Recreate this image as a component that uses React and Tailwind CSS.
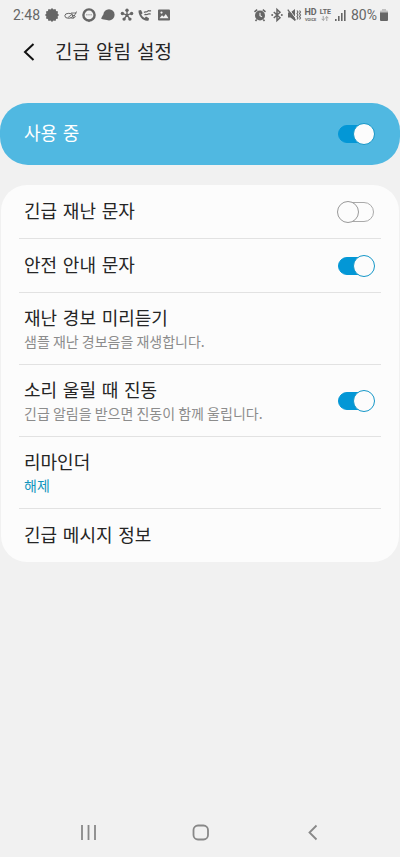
// App.jsx
import React, { useState } from 'react';

const burst = Array.from({ length: 24 }, (_, i) => {
  const r = i % 2 ? 5.8 : 7;
  const a = (i * Math.PI) / 12;
  return `${(7 + r * Math.sin(a)).toFixed(2)},${(7 - r * Math.cos(a)).toFixed(2)}`;
}).join(' ');

function StatusIcon({ children }) {
  return (
    <svg className="size-3.5 shrink-0 overflow-visible" viewBox="0 0 14 14" fill="none" stroke="currentColor" aria-hidden="true">
      {children}
    </svg>
  );
}

function StatusBar() {
  return (
    <div className="flex h-[30px] items-center pl-[13px] pr-3 text-sm text-[#666666] font-[Roboto,sans-serif]">
      <span className="w-8">2:48</span>

      {/* Notifications */}
      <div className="flex w-[126px] items-center justify-between">
        <StatusIcon>
          <polygon points={burst} fill="currentColor" stroke="none" />
        </StatusIcon>
        <StatusIcon>
          <ellipse cx="4.8" cy="7.8" rx="4" ry="2.5" />
          <path d="M4 9.5 8.5 6M7 5h5.5M12.5 3.5 9 10.5M6.5 9.5c2 1.2 4 .8 5.2-1.2M8 7.5h3" strokeWidth="0.9" />
        </StatusIcon>
        <StatusIcon>
          <circle cx="7" cy="7" r="5.6" strokeWidth="2.4" />
          <path d="M5 11.5 7 14.200l2-2.700z" fill="currentColor" stroke="none" />
          <path d="M4.4 6.8h1M6.500 6.800h1M8.600 6.800h1" strokeWidth="1" />
        </StatusIcon>
        <StatusIcon>
          <circle cx="8" cy="6.8" r="5.6" fill="currentColor" stroke="none" />
          <path d="M4 5.5C2.4 6.5 .8 8.4.2 10.800c2 .8 4.800 1.100 6.800.9z" fill="currentColor" stroke="none" />
        </StatusIcon>
        <StatusIcon>
          <path d="M7 7V2.6M7 7l4.3-1.4M7 7l2.8 3.8M7 7l-2.8 3.8M7 7 2.7 5.6" strokeWidth="1.300" />
          <g fill="currentColor" stroke="none">
            <circle cx="7" cy="2.200" r="1.700" />
            <circle cx="11.600" cy="5.500" r="1.700" />
            <circle cx="9.900" cy="11.100" r="1.700" />
            <circle cx="4.100" cy="11.100" r="1.700" />
            <circle cx="2.400" cy="5.500" r="1.700" />
            <circle cx="7" cy="7" r="1.600" />
          </g>
        </StatusIcon>
        <StatusIcon>
          <path d="M.5 2.600 3 2l1.600 3.200-1.400 1.300c.8 1.600 1.800 2.700 3.400 3.500l1.400-1.400 3 1.700-.4 2.300C5.500 14 .3 8.500.5 2.600z" fill="currentColor" stroke="none" />
          <path d="M6 4.500c1.500-1.500 2 .3 3.500-1.200s2 .4 3.500-.8M6.500 7c1.500-1.300 2 .2 3.200-.8s1.800.2 3-.5" strokeWidth="1.200" />
        </StatusIcon>
        <StatusIcon>
          <path
            d="M2.200 1.400h9.600c.7 0 1.200.5 1.200 1.200v8.800c0 .7-.5 1.200-1.200 1.200H2.200C1.500 12.600 1 12.100 1 11.400V2.600c0-.7.5-1.200 1.200-1.200zM2.500 10.300h9L8.800 6 6.700 8.800 5 7.200zM4.500 3.500a1.100 1.100 0 1 0 0 2.200 1.100 1.100 0 0 0 0-2.200z"
            fill="currentColor" fillRule="evenodd" stroke="none"
          />
        </StatusIcon>
      </div>

      {/* Device state */}
      <div className="ml-auto flex items-center gap-[3px]">
        <StatusIcon>
          <circle cx="7" cy="7.500" r="5" fill="currentColor" stroke="none" />
          <path d="M1.500 3.800 4.200 1.600M12.500 3.800 9.800 1.600M3.700 11.500l-1.200 1.500M10.300 11.500l1.200 1.500" strokeWidth="1.600" />
          <path d="M7 4.700v3l2 1.200" stroke="#f1f1f1" strokeWidth="1.100" />
        </StatusIcon>
        <StatusIcon>
          <path d="M3.800 4 10 9.800 7 12.600V1.400l3 2.800L3.800 10" strokeWidth="1.500" />
          <circle cx="2.200" cy="7" r="1" fill="currentColor" stroke="none" />
          <circle cx="11.800" cy="7" r="1" fill="currentColor" stroke="none" />
        </StatusIcon>
        <StatusIcon>
          <path d="M1 4.500h2.500L8 1v12L3.500 9.500H1z" fill="currentColor" stroke="none" />
          <path d="M1.800 1 9 10.600" stroke="#f1f1f1" strokeWidth="1" />
          <path d="M.8 1.600 8.500 12.300" strokeWidth="1.300" />
          <path d="m10 2.500 1 1.500-1 1.500 1 1.500-1 1.500 1 1.500-1 1.500M12.500 2.500l1 1.500-1 1.500 1 1.500-1 1.500 1 1.500-1 1.500" strokeWidth="1.100" />
        </StatusIcon>
        <div className="flex flex-col items-center font-bold">
          <span className="text-[9px] leading-[9px]">HD</span>
          <span className="text-[4px] leading-[5px]">VOICE</span>
        </div>
        <div className="flex flex-col items-center font-bold">
          <span className="text-[7px] leading-[7px]">LTE</span>
          <svg className="h-[5px] w-2" viewBox="0 0 8 5" fill="none" stroke="#999999" strokeWidth="0.9" aria-hidden="true">
            <path d="M2.200 0v4.300M.6 2.800l1.600 1.600 1.600-1.600M5.800 5V.7M4.200 2.200 5.800.6l1.600 1.600" />
          </svg>
        </div>
        <svg className="ml-px h-3 w-[11px]" viewBox="0 0 11 12" fill="currentColor" aria-hidden="true">
          <path d="M0 10h1.600v2H0zM3 7h1.600v5H3zM6 4h1.600v8H6zM9 1h1.600v11H9z" />
        </svg>
        <span className="ml-0.5">80%</span>
        <svg className="h-3 w-2" viewBox="0 0 8 12" fill="currentColor" aria-hidden="true">
          <path d="M2 0h4v1.500h1.200q.8 0 .8.800V4H0V2.300q0-.8.800-.8H2z" opacity=".35" />
          <path d="M0 3.500h8v7.500q0 1-1 1H1q-1 0-1-1z" />
        </svg>
      </div>
    </div>
  );
}

function Switch({ id, checked, onChange }) {
  return (
    <input
      id={id}
      type="checkbox"
      role="switch"
      checked={checked}
      onChange={onChange}
      className="relative h-5 w-9 shrink-0 cursor-pointer appearance-none rounded-full border border-[#aaaaaa] bg-[#fcfcfc] before:absolute before:-left-0.5 before:-top-0.5 before:size-[22px] before:rounded-full before:border before:border-[#999999] before:bg-[#fcfcfc] checked:h-[18px] checked:border-[#0397d6] checked:bg-[#0397d6] checked:before:left-3.5 checked:before:-top-[3px] checked:before:border-[#1597c8]"
    />
  );
}

const items = [
  { id: 'disaster', title: '긴급 재난 문자', toggle: true },
  { id: 'safety', title: '안전 안내 문자', toggle: true },
  { id: 'preview', title: '재난 경보 미리듣기', desc: '샘플 재난 경보음을 재생합니다.' },
  { id: 'vibrate', title: '소리 울릴 때 진동', desc: '긴급 알림을 받으면 진동이 함께 울립니다.', toggle: true },
  { id: 'reminder', title: '리마인더', value: '해제' },
  { id: 'info', title: '긴급 메시지 정보' },
];

function SettingRow({ item, checked, onToggle }) {
  const Tag = item.toggle ? 'label' : 'button';
  const tall = item.desc || item.value;

  return (
    <Tag
      {...(item.toggle ? { htmlFor: item.id } : { type: 'button' })}
      className={`flex w-full cursor-pointer items-center justify-between pl-[5px] pr-[7px] text-left ${tall ? 'h-[71px]' : 'h-[53px]'}`}
    >
      <span className="flex flex-col">
        <span className="font-['DejaVu_Sans','Noto_Sans_CJK_KR',sans-serif] text-lg leading-6 text-[#252525]">{item.title}</span>
        {item.desc && <span className="text-sm leading-5 text-[#8c8c8c]">{item.desc}</span>}
        {item.value && <span className="text-sm leading-5 text-[#1295bd]">{item.value}</span>}
      </span>
      {item.toggle && <Switch id={item.id} checked={checked} onChange={onToggle} />}
    </Tag>
  );
}

function NavigationBar() {
  return (
    <nav className="mt-auto flex h-[50px] items-center justify-around px-8 text-[#888888]">
      <button type="button" aria-label="최근 앱" className="flex w-12 justify-center">
        <svg className="size-5" viewBox="0 0 20 20" fill="none" stroke="currentColor" strokeWidth="1.800">
          <path d="M4 3v15M10.500 3v15M17 3v15" />
        </svg>
      </button>
      <button type="button" aria-label="홈" className="flex w-12 justify-center">
        <svg className="size-5" viewBox="0 0 20 20" fill="none" stroke="currentColor" strokeWidth="1.800">
          <rect x="3.500" y="3.500" width="14.500" height="14" rx="4.500" />
        </svg>
      </button>
      <button type="button" aria-label="뒤로" className="flex w-12 justify-center">
        <svg className="size-5" viewBox="0 0 20 20" fill="none" stroke="currentColor" strokeWidth="1.800">
          <path d="m14.500 3.500-7 7 7 7" />
        </svg>
      </button>
    </nav>
  );
}

function App() {
  const [enabled, setEnabled] = useState(true);
  const [toggles, setToggles] = useState({ disaster: false, safety: true, vibrate: true });

  const toggleItem = (id) => {
    setToggles({ ...toggles, [id]: !toggles[id] });
  };

  return (
    <div className="flex min-h-screen flex-col bg-[#f1f1f1] font-['Noto_Sans_CJK_KR',sans-serif]">
      <StatusBar />

      <header className="flex h-11 items-center gap-3 pl-[19px]">
        <button type="button" aria-label="뒤로" className="text-[#111111]">
          <svg className="size-6" viewBox="0 0 24 24" fill="none" stroke="currentColor" strokeWidth="2">
            <path d="M14.500 4 6 12l8.500 8" />
          </svg>
        </button>
        <h1 className="font-['DejaVu_Sans','Noto_Sans_CJK_KR',sans-serif] text-[19px] leading-6 text-[#252525]">긴급 알림 설정</h1>
      </header>

      <main className="mt-[29px]">
        <label
          htmlFor="enabled"
          className="flex h-[62px] cursor-pointer items-center justify-between rounded-[28px] bg-[#50b8e1] pl-6 pr-[26px] font-['DejaVu_Sans','Noto_Sans_CJK_KR',sans-serif] text-lg leading-6 text-white"
        >
          사용 중
          <Switch id="enabled" checked={enabled} onChange={() => setEnabled(!enabled)} />
        </label>

        <ul className="mx-px mt-5 divide-y divide-[#e2e2e2] rounded-[26px] bg-[#fcfcfc] px-[18px]">
          {items.map((item) => (
            <li key={item.id}>
              <SettingRow item={item} checked={toggles[item.id]} onToggle={() => toggleItem(item.id)} />
            </li>
          ))}
        </ul>
      </main>

      <NavigationBar />
    </div>
  );
}

export default App;
